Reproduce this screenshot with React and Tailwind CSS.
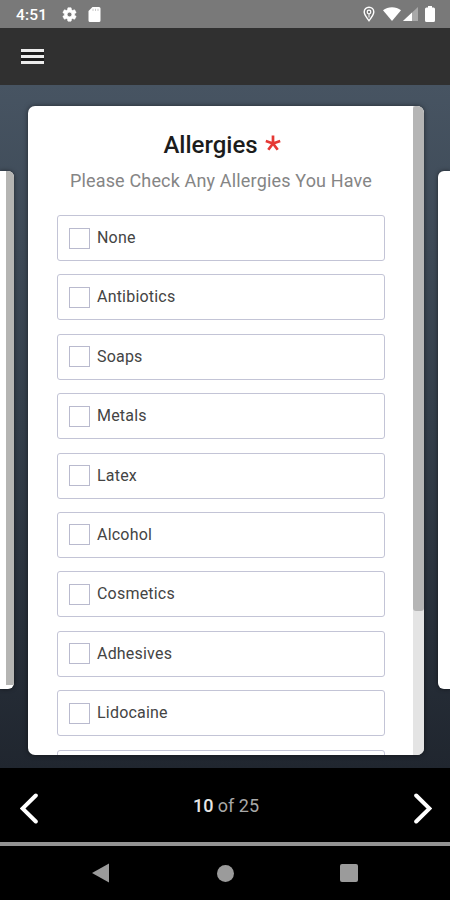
const OPTIONS = [
  "None",
  "Antibiotics",
  "Soaps",
  "Metals",
  "Latex",
  "Alcohol",
  "Cosmetics",
  "Adhesives",
  "Lidocaine",
];

function StatusBar() {
  return (
    <div className="flex h-[28px] shrink-0 items-center bg-[#797979] pr-[15px] pl-[16px] text-white">
      <span className="mt-[2px] w-[45px] text-[15.5px] leading-[28px] font-medium tracking-[0.2px]">4:51</span>
      <svg className="h-[17px] w-[17px]" viewBox="0 0 24 24" fill="currentColor">
        <path d="M19.14 12.94c.04-.3.06-.61.06-.94s-.02-.64-.07-.94l2.03-1.58a.49.49 0 0 0 .12-.61l-1.92-3.32a.49.49 0 0 0-.59-.22l-2.39.96a7 7 0 0 0-1.62-.94l-.36-2.54a.48.48 0 0 0-.48-.41h-3.84a.47.47 0 0 0-.47.41l-.36 2.54c-.59.24-1.13.57-1.62.94l-2.39-.96a.48.48 0 0 0-.59.22L2.74 8.87a.47.47 0 0 0 .12.61l2.03 1.58c-.05.3-.09.63-.09.94s.02.64.07.94l-2.03 1.58a.49.49 0 0 0-.12.61l1.92 3.32c.12.22.37.29.59.22l2.39-.96c.5.38 1.03.7 1.62.94l.36 2.54c.05.24.24.41.48.41h3.84c.24 0 .44-.17.47-.41l.36-2.54a7 7 0 0 0 1.62-.94l2.39.96c.22.08.47 0 .59-.22l1.92-3.32a.47.47 0 0 0-.12-.61zM12 15.3A3.3 3.3 0 1 1 12 8.7a3.3 3.3 0 0 1 0 6.6z" stroke="currentColor" strokeWidth="0.8" />
      </svg>
      <svg className="ml-[10px] h-[15px] w-[13px]" viewBox="0 0 13 15">
        <path d="M4.5 0H11a1.5 1.5 0 0 1 1.5 1.5v12A1.5 1.5 0 0 1 11 15H2A1.5 1.5 0 0 1 .5 13.500V4z" fill="white" />
        <path d="M5 1.800v2.200M7.500 1.800v2.200M10 1.800v2.200" stroke="#c4c4c4" strokeWidth="0.9" />
      </svg>
      <svg className="ml-auto h-[16px] w-[12px]" viewBox="0 0 12 16" fill="none" stroke="white">
        <path d="M6 14.700C3.400 11.300 1.200 8.600 1.200 6a4.800 4.800 0 0 1 9.600 0c0 2.600-2.200 5.300-4.800 8.700z" strokeWidth="1.400" />
        <circle cx="6" cy="6" r="1.800" strokeWidth="1.200" />
        <path d="M6 8v3.500" strokeWidth="1" />
      </svg>
      <svg className="ml-[8px] h-[14px] w-[18px]" viewBox="0 0 18 14" fill="white">
        <path d="M0 3.200C5 -0.700 13 -0.700 18 3.200L9 14z" />
      </svg>
      <svg className="ml-[2px] h-[14px] w-[15px]" viewBox="0 0 15 14">
        <path d="M15 0v14H0z" fill="#a9a9a9" />
        <path d="M9 5.600V14H0z" fill="white" />
      </svg>
      <svg className="ml-[7px] h-[16px] w-[10px]" viewBox="0 0 10 16" fill="white">
        <path d="M3 0h4v1.500h1.500A1.500 1.500 0 0 1 10 3v11.500A1.500 1.500 0 0 1 8.500 16h-7A1.500 1.500 0 0 1 0 14.500V3a1.500 1.500 0 0 1 1.500-1.500H3z" />
      </svg>
    </div>
  );
}

function Option({ label }) {
  return (
    <label className="flex h-[46px] w-[328px] shrink-0 items-center rounded-[3px] border border-[#c3c4d6] pl-[11px]">
      <span className="h-[21px] w-[21px] border border-[#b9bace]" />
      <span className="ml-[7px] text-[16px] leading-[20px] tracking-[0.2px] text-[#444444]">{label}</span>
    </label>
  );
}

function QuestionCard() {
  return (
    <section className="flex h-[649px] w-[396px] shrink-0 overflow-hidden rounded-[7px] bg-white shadow-[0_0_5px_rgba(0,0,0,0.5)]">
      <div className="flex h-full w-[385px] flex-col overflow-hidden pl-[29px]">
        <div className="flex w-[328px] shrink-0 flex-col items-center">
          <h1 className="mt-[23px] ml-[2px] flex text-[24px] leading-[32px] font-medium text-[#1c1c1c]">
            Allergies
            <svg className="mt-[6px] ml-[7px] h-[17px] w-[16px]" viewBox="0 0 16 17" stroke="#e53935" strokeWidth="2.700">
              <path d="M8 8.500V0.500M8 8.500L0.800 6M8 8.500L15.200 6M8 8.500L3.300 14.800M8 8.500L12.700 14.800" />
            </svg>
          </h1>
          <p className="mt-[8px] text-[18px] leading-[24px] tracking-[0.16px] whitespace-nowrap text-[#858585]">
            Please Check Any Allergies You Have
          </p>
        </div>
        <div className="mt-[22px] flex flex-col gap-[13.400px]">
          {OPTIONS.map((label) => (
            <Option key={label} label={label} />
          ))}
          <div className="h-[46px] w-[328px] shrink-0 rounded-[3px] border border-[#c3c4d6]" />
        </div>
      </div>
      <div className="h-full w-[11px] bg-[#e4e4e4]">
        <div className="h-[505px] rounded-[3px] bg-[#b5b5b5]" />
      </div>
    </section>
  );
}

export default function App() {
  return (
    <div className="flex h-[900px] w-[450px] flex-col overflow-hidden bg-black font-['Roboto',sans-serif]">
      <StatusBar />
      <header className="flex h-[57px] shrink-0 items-center bg-[#303030] pl-[21px]">
        <div className="flex w-[23px] flex-col gap-[3px] bg-[#1c1c1c]">
          <span className="h-[3px] bg-[#ececec]" />
          <span className="h-[3px] bg-[#ececec]" />
          <span className="h-[3px] bg-[#ececec]" />
        </div>
      </header>
      <main className="flex h-[683px] shrink-0 items-start justify-between bg-linear-to-b from-[#475462] via-[#333e4a] to-[#20262f] pt-[21px]">
        <div className="mt-[65px] flex h-[518px] w-[14px] justify-end overflow-hidden rounded-r-[6px] bg-white shadow-[0_0_4px_rgba(0,0,0,0.5)]">
          <div className="h-[514px] w-[8px] bg-[#b5b5b3]" />
        </div>
        <QuestionCard />
        <div className="mt-[65px] h-[518px] w-[12px] rounded-l-[6px] bg-white shadow-[0_0_4px_rgba(0,0,0,0.5)]" />
      </main>
      <footer className="flex h-[74px] shrink-0 items-center justify-between bg-black pr-[18px] pl-[20px]">
        <svg className="mt-[6px] h-[31px] w-[18px]" viewBox="0 0 18 31" fill="none" stroke="white" strokeWidth="4" strokeLinecap="round">
          <path d="M15.800 2.500L2.500 15.500L15.800 28.500" />
        </svg>
        <p className="mt-[2px] text-[18px] leading-[24px] text-[#a8a8a8]">
          <span className="font-medium text-[#e6e6e6]">10</span> of 25
        </p>
        <svg className="mt-[6px] h-[31px] w-[18px]" viewBox="0 0 18 31" fill="none" stroke="white" strokeWidth="4" strokeLinecap="round">
          <path d="M2.200 2.500L15.500 15.500L2.200 28.500" />
        </svg>
      </footer>
      <div className="h-[4px] shrink-0 bg-[#939393]" />
      <nav className="flex h-[54px] items-center justify-between bg-black pr-[92px] pl-[92px]">
        <svg className="h-[20px] w-[18px]" viewBox="0 0 18 20" fill="#9b9b9b">
          <path d="M17 0.500v19L0 10z" />
        </svg>
        <span className="h-[17px] w-[17px] rounded-full bg-[#9b9b9b]" />
        <span className="h-[18px] w-[18px] rounded-[2px] bg-[#9b9b9b]" />
      </nav>
    </div>
  );
}
